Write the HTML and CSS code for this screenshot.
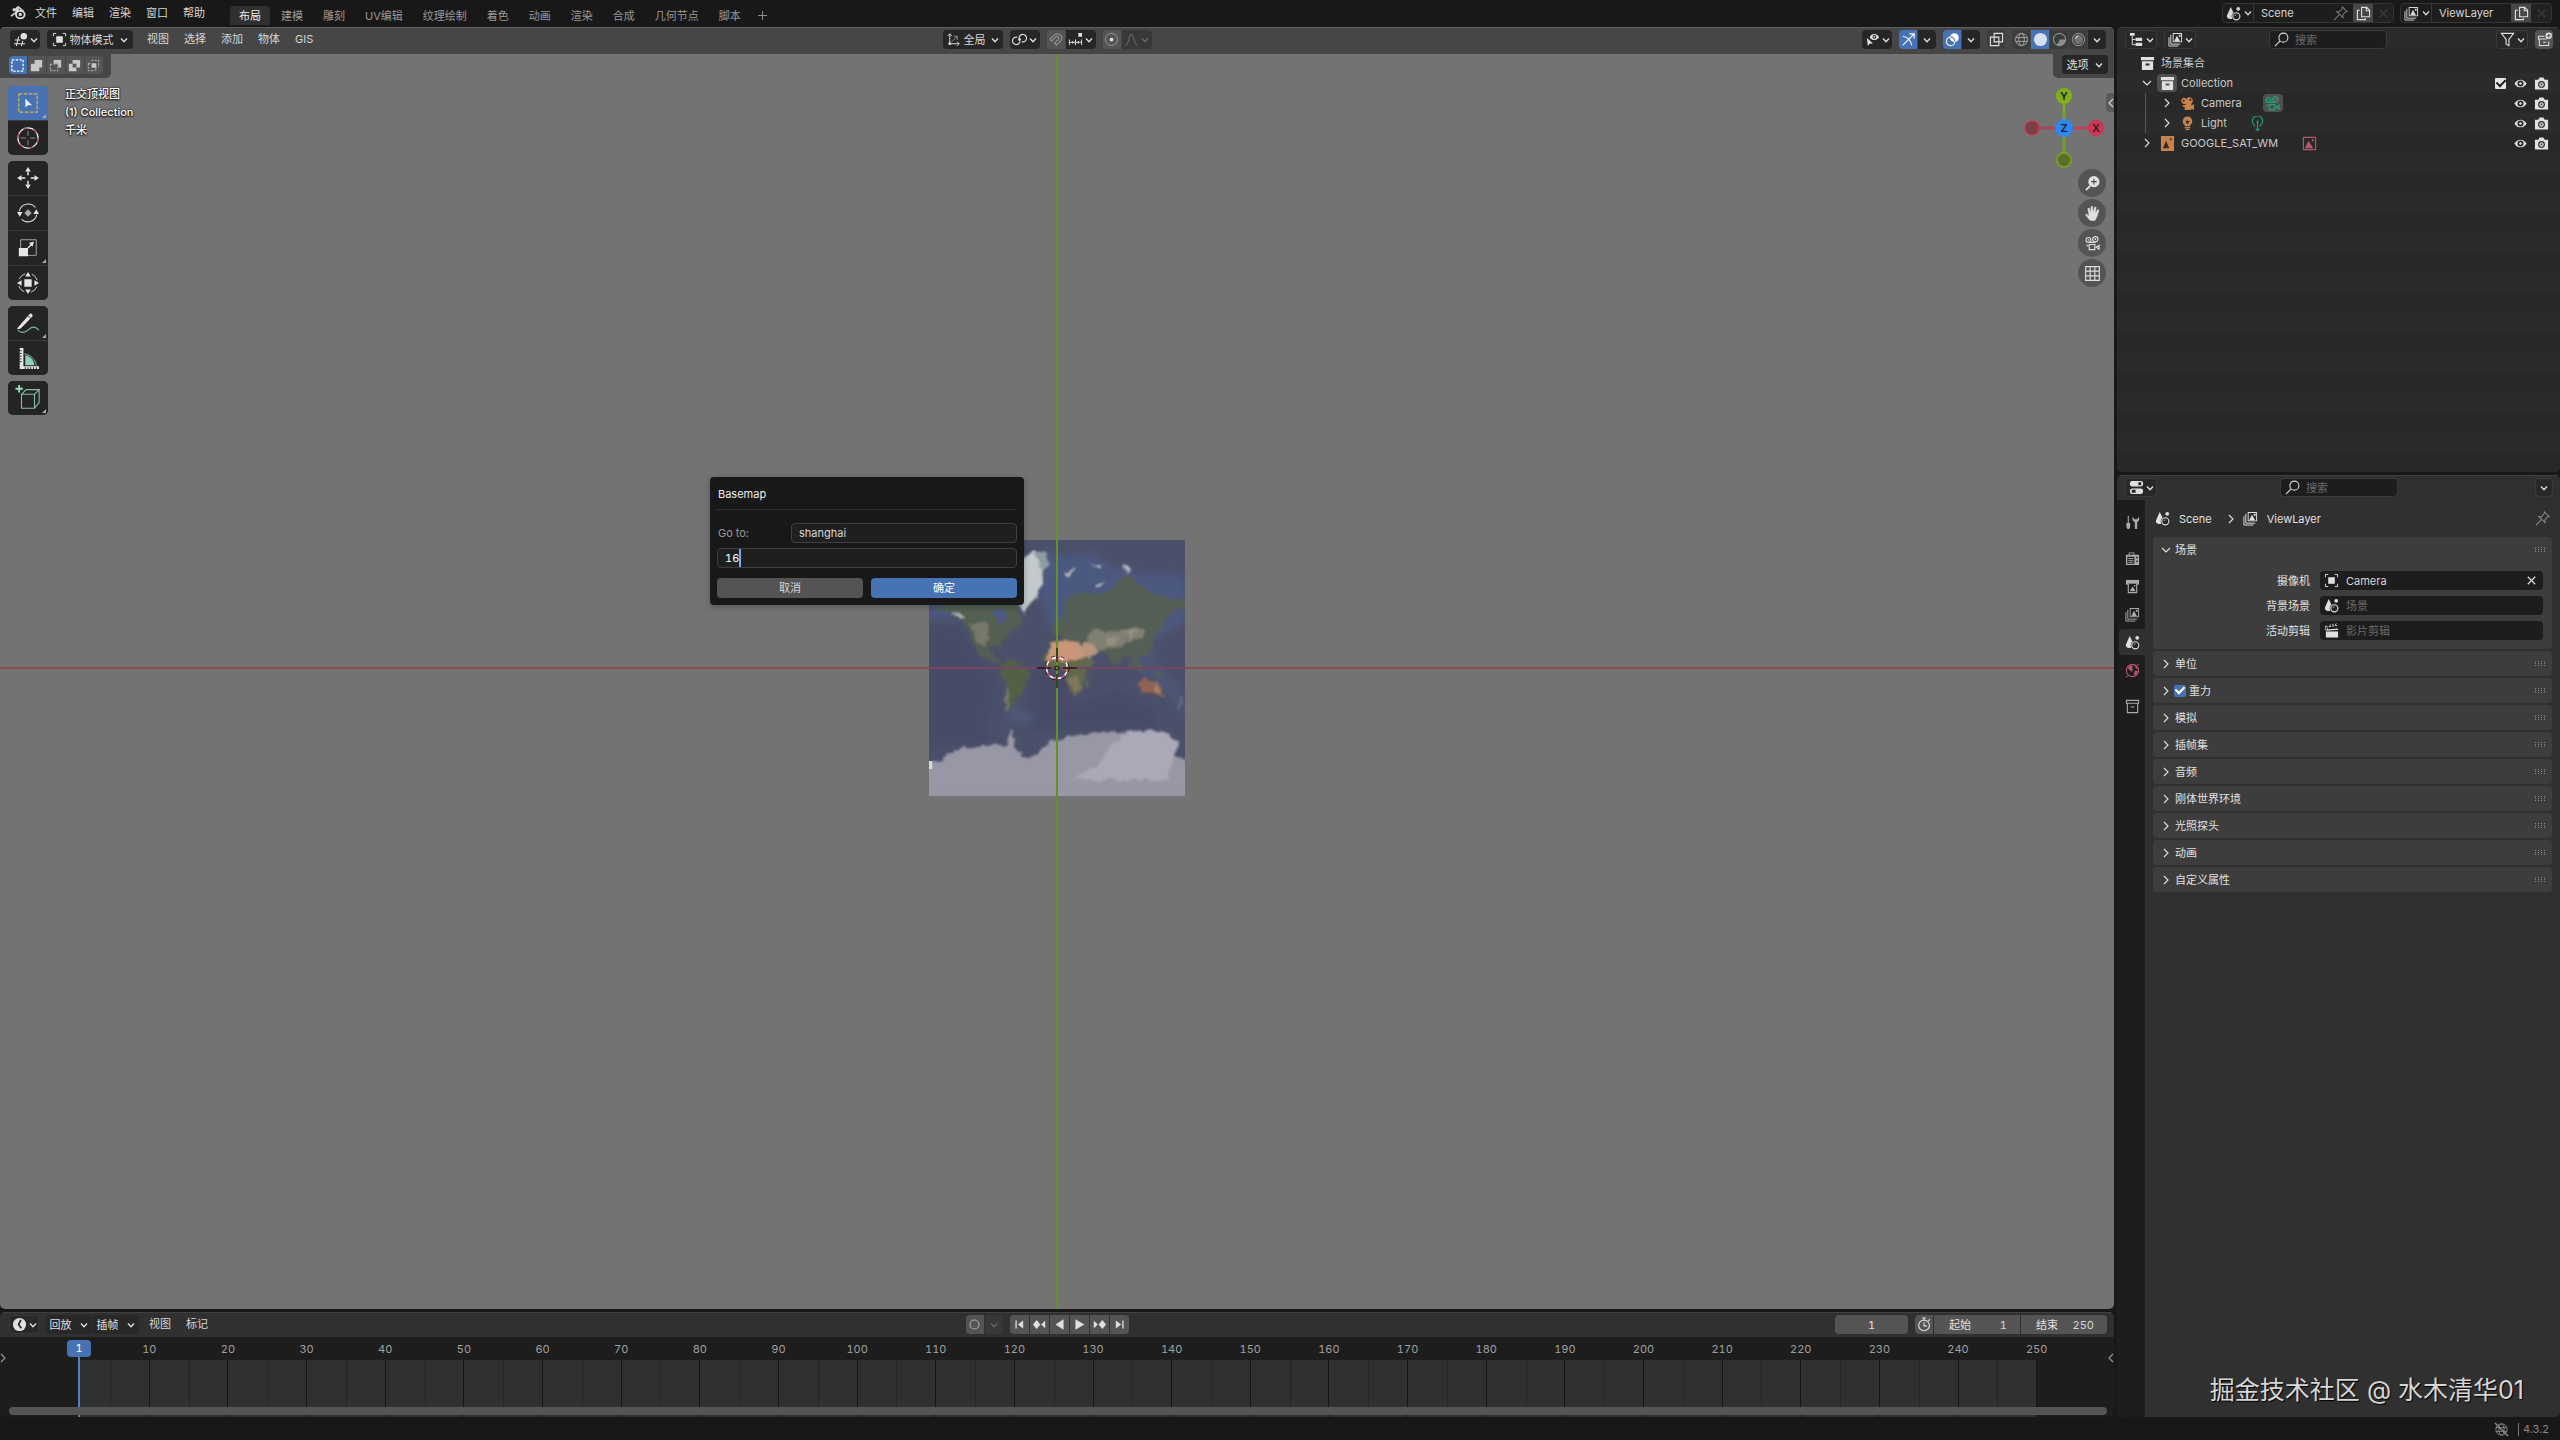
FILE: index.html
```html
<!DOCTYPE html>
<html lang="zh-CN">
<head>
<meta charset="utf-8">
<title>Blender</title>
<link rel="stylesheet" href="styles.css">
</head>
<body>
<svg class="sprite" aria-hidden="true">
  <defs>
  <symbol id="logo" viewBox="0 0 16 16"><path d="M1 11.2 8.6 5.4H3.4V4h5L6.8 2.8 8 1.7l5.600 4.600" fill="none" stroke="currentColor" stroke-width="1.500" stroke-linejoin="round"/><ellipse cx="10.300" cy="9.600" rx="4.300" ry="3.800" fill="none" stroke="currentColor" stroke-width="1.900"/><circle cx="10.300" cy="9.500" r="1.700" fill="currentColor"/></symbol>
  <symbol id="chev" viewBox="0 0 10 10"><path d="M2 3.500 5 6.800 8 3.500" fill="none" stroke="currentColor" stroke-width="1.300"/></symbol>
  <symbol id="chevr" viewBox="0 0 10 10"><path d="M3 1 7 5 3 9" fill="none" stroke="currentColor" stroke-width="1.100"/></symbol>
  <symbol id="ed3d" viewBox="0 0 16 16"><path d="M6 5 3.500 15M10.500 9.500 9 15M2 8.500h6M1 12.500h12" fill="none" stroke="currentColor" stroke-width="1.100"/><circle cx="11.500" cy="4.500" r="3.500" fill="currentColor"/></symbol>
  <symbol id="object" viewBox="0 0 16 16"><path d="M4.500 4.500h7v7h-7z" fill="currentColor"/><path d="M1.500 4.500v-3h3M11.500 1.500h3v3M14.500 11.500v3h-3M4.500 14.500h-3v-3" fill="none" stroke="currentColor"/></symbol>
  <symbol id="orient" viewBox="0 0 16 16"><path d="M4 2v10.500h10M1.800 4.200 4 2l2.200 2.200M11.800 10.300l2.200 2.200-2.200 2.200" fill="none" stroke="currentColor"/><circle cx="4" cy="12.500" r="1.500" fill="currentColor"/><path d="M6 10.500 11.500 5M8 4.500h4v4" fill="none" stroke="currentColor" opacity=".6"/></symbol>
  <symbol id="pivot" viewBox="0 0 16 16"><path d="M8.500 9.800a4 4 0 1 1-2.800-4.200M7.500 6.200a4 4 0 1 1 2.800 4.200" fill="none" stroke="currentColor" stroke-width="1.200"/><circle cx="8" cy="8" r="1.500" fill="currentColor"/></symbol>
  <symbol id="magnet" viewBox="0 0 16 16"><path d="M2 7.500 7 3c5-3.500 10 2.500 6.500 6.500L9 14l-2-2 4-4.200C12.500 5.500 10 3.500 8.500 5.200L4 9.500z" fill="none" stroke="currentColor" stroke-width="1.100"/></symbol>
  <symbol id="snapinc" viewBox="0 0 16 16"><path d="M1.500 8v6M14.500 8v6M1 11h14M5 9.500v3M8 8v6M11 9.500v3" fill="none" stroke="currentColor"/><path d="M11 1h4v4h-4z" fill="currentColor"/></symbol>
  <symbol id="prop" viewBox="0 0 16 16"><circle cx="8" cy="8" r="6.500" fill="none" stroke="currentColor" opacity=".5"/><circle cx="8" cy="8" r="2" fill="currentColor"/></symbol>
  <symbol id="falloff" viewBox="0 0 16 16"><path d="M1.500 14C6 13.500 5 2.500 8 2.500S10 13.500 14.500 14" fill="none" stroke="currentColor" stroke-width="1.200"/></symbol>
  <symbol id="visib" viewBox="0 0 16 16"><path d="M5 5.500c2-4.500 7.500-4.500 10 0-2.500 4-8 4-10 0z" fill="currentColor"/><circle cx="10" cy="5.200" r="2" fill="#222"/><circle cx="10" cy="5.200" r=".9" fill="currentColor"/><path d="m2 6.500 1 8.500 2-2.500 3.500-.5z" fill="currentColor"/></symbol>
  <symbol id="gizmo" viewBox="0 0 16 16"><path d="M2 14 13.500 2.500M9 2h5v5M2 4.500c4 .5 8.500 4 9.500 9.500" fill="none" stroke="currentColor" stroke-width="1.200"/></symbol>
  <symbol id="overlay" viewBox="0 0 16 16"><circle cx="10" cy="6" r="4.700" fill="currentColor"/><circle cx="6" cy="10" r="4.500" fill="none" stroke="currentColor" stroke-width="1.200"/><path d="M10.500 10A4.500 4.500 0 0 0 6 5.500" fill="none" stroke="#4772b3" stroke-width="1.200"/></symbol>
  <symbol id="xray" viewBox="0 0 16 16"><path d="M5.500 1.500h9v9h-9zM1.500 5.500h9v9h-9z" fill="none" stroke="currentColor" stroke-width="1.200"/></symbol>
  <symbol id="wire" viewBox="0 0 16 16"><g fill="none" stroke="currentColor"><circle cx="8" cy="8" r="6.500"/><ellipse cx="8" cy="8" rx="3" ry="6.500"/><path d="M2 6h12M2 10h12"/></g></symbol>
  <symbol id="solid" viewBox="0 0 16 16"><circle cx="8" cy="8" r="7" fill="#d4dff0"/></symbol>
  <symbol id="material" viewBox="0 0 16 16"><circle cx="8" cy="8" r="6.500" fill="none" stroke="currentColor"/><path d="M8 1.500v6.500h6.500A6.500 6.500 0 0 1 5 13.500 6.500 6.500 0 0 0 8 8z" fill="currentColor" opacity=".75"/></symbol>
  <symbol id="rendered" viewBox="0 0 16 16"><circle cx="8" cy="8" r="6.500" fill="none" stroke="currentColor"/><circle cx="8" cy="8" r="4.800" fill="currentColor" opacity=".5"/><path d="M5 7a4 4 0 0 1 3-3" fill="none" stroke="#fff"/></symbol>
  <symbol id="sel1" viewBox="0 0 16 16"><path d="M2 2h12v12H2z" fill="none" stroke="#fff" stroke-width="1.400" stroke-dasharray="2.500 1.500"/></symbol>
  <symbol id="sel2" viewBox="0 0 16 16"><path d="M6 2h8v8h-3v4H2V6h4z" fill="currentColor"/></symbol>
  <symbol id="sel3" viewBox="0 0 16 16"><path d="M6 2h8v8h-3V6H6z" fill="currentColor"/><path d="M2.500 6.500h8v7h-8z" fill="none" stroke="currentColor" stroke-dasharray="2 1.500"/></symbol>
  <symbol id="sel4" viewBox="0 0 16 16"><path fill-rule="evenodd" d="M6 2h8v8h-4v4H2V6h4zm0 4v4h4V6z" fill="currentColor"/></symbol>
  <symbol id="sel5" viewBox="0 0 16 16"><path d="M6 5.500h5v5H6z" fill="currentColor"/><path d="M6 2.500h7.500V10M2.500 6v7.500H10M2.500 6H5M10.500 13v-2" fill="none" stroke="currentColor" stroke-dasharray="2 1.500"/></symbol>
  <symbol id="t-select" viewBox="0 0 24 24"><path d="M2 2h20v20H2z" fill="none" stroke="#e2b14c" stroke-width="1.300" stroke-dasharray="4 1.500"/><path d="m9 7 .2 10 2.800-2.500 4.500 0z" fill="#e4ecf8"/></symbol>
  <symbol id="t-cursor" viewBox="0 0 24 24"><circle cx="12" cy="12" r="11" fill="none" stroke="#e6e6e6" stroke-width="1.400"/><circle cx="12" cy="12" r="11" fill="none" stroke="#b8445b" stroke-width="1.500" stroke-dasharray="5 6.500"/><path d="M12 4v5.500M12 14.500V20M4 12h5.500M14.500 12H20" stroke="#8c8c84" stroke-width="1.100"/></symbol>
  <symbol id="t-move" viewBox="0 0 24 24"><path d="m12 0 3 5H9zM12 24l-3-5h6zM0 12l5-3v6zM24 12l-5 3V9z" fill="#e6e6e6"/><path d="M12 5v4M12 15v4M5 12h4M15 12h4" stroke="#e6e6e6" stroke-width="1.600"/></symbol>
  <symbol id="t-rotate" viewBox="0 0 24 24"><path d="M2.500 10A10 10 0 0 1 20 6M21.500 14A10 10 0 0 1 5 19" fill="none" stroke="#ddd" stroke-width="1.200"/><path d="M0 11h6l-3 5zM18 13h6l-3-5z" fill="#e6e6e6"/><path d="m12 8 4 4-4 4-4-4z" fill="#aaa"/></symbol>
  <symbol id="t-scale" viewBox="0 0 24 24"><path d="M4 12V3h17v17h-9" fill="none" stroke="#b0b0b0"/><path d="M2 12h10v9H2z" fill="#e6e6e6"/><path d="m12 12 4-4" stroke="#e6e6e6" stroke-width="1.500"/><path d="M13 6.500 18.500 5 17 10.500z" fill="#e6e6e6"/></symbol>
  <symbol id="t-transform" viewBox="0 0 24 24"><circle cx="12" cy="12" r="10.500" fill="none" stroke="#ddd" stroke-dasharray="9 7.500" stroke-dashoffset="-4"/><path d="M8 8h8v8H8z" fill="#e6e6e6"/><path d="m12 0 3 5H9zM12 24l-3-5h6zM0 12l5-3v6zM24 12l-5 3V9z" fill="#e6e6e6"/></symbol>
  <symbol id="t-annotate" viewBox="0 0 24 24"><path d="M1 17 14 2c1-1.500 4 1 2.800 2.800L4 18l-4 1z" fill="#e6e6e6"/><path d="m12 4 3 3" stroke="#242424"/><path d="M1 20c5 4 9 2 12-1s7-4 11 1" fill="none" stroke="#78b8a0" stroke-width="1.200"/></symbol>
  <symbol id="t-measure" viewBox="0 0 24 24"><path d="M9 20V9c6 1 9 5 10 11z" fill="#8cd5b4"/><path d="M8 7.500c7 1 12 6 13 13" fill="none" stroke="#8cd5b4"/><path d="M3 1h4v20h17v3H3z" fill="#e6e6e6"/><path d="M3 4h2M3 7h2M3 10h2M3 13h2M3 16h2M9 24v-2M12 24v-2M15 24v-2M18 24v-2M21 24v-2" stroke="#222"/></symbol>
  <symbol id="t-cube" viewBox="-2 -2 28 28"><path d="M5 8h14v15H5zM5 8l5-5h14l-5 5M24 3v14l-5 6M19 8v15" fill="none" stroke="#82bfa4" stroke-width="1.200"/><path d="M2.500 -2v8M-1.500 2h8" stroke="#9be0bf" stroke-width="2"/></symbol>
  <symbol id="zoomin" viewBox="0 0 16 16"><circle cx="9.500" cy="6" r="6" fill="#e0e0e0"/><path d="M5.500 10.500 1 15" stroke="#e0e0e0" stroke-width="2"/><path d="M9.500 3v6M6.500 6h6" stroke="#444" stroke-width="1.100"/></symbol>
  <symbol id="hand" viewBox="0 0 16 16"><path d="M5 15 .5 9.200l1-.8L4.500 11 3 2.500l1.500-.3L6 7.500 6.500.5h1.600L8.600 7.300 10.400 1l1.500.4L11 8l2.700-4.200 1.300.8L12.500 12l-2 3.500H6z" fill="#e0e0e0" stroke="#e0e0e0" stroke-width=".5" stroke-linejoin="round"/></symbol>
  <symbol id="camout" viewBox="0 0 16 16"><g fill="none" stroke="currentColor" stroke-width="1.200"><circle cx="3.700" cy="4.200" r="2.600"/><circle cx="11" cy="3.400" r="2.800"/><path d="M4 6.800h7M4.500 9h6v5.500h-6zM12 12l3-2v4zM1.500 9.500l2 1.500"/></g><circle cx="11" cy="3.400" r=".9" fill="currentColor"/><circle cx="3.700" cy="4.200" r=".8" fill="currentColor"/></symbol>
  <symbol id="grid" viewBox="0 0 16 16"><path d="M.7.7h14.600v14.600H.7zM5.500.7v14.600M10.500.7v14.600M.7 5.500h14.600M.7 10.500h14.600" fill="none" stroke="#e0e0e0" stroke-width="1.200"/></symbol>
  <symbol id="scene" viewBox="0 0 16 16"><path d="M5 1 9 9c0 2-1 3.500-2.500 4.500C3 14.500.5 13 1 10z" fill="currentColor"/><circle cx="13" cy="3" r="2" fill="currentColor"/><circle cx="11" cy="11" r="4.900" fill="#252525"/><circle cx="11" cy="11" r="3.800" fill="none" stroke="currentColor" stroke-width="1.200"/><path d="M9.500 10.500a2 2 0 0 1 1.500-1.200" fill="none" stroke="currentColor" stroke-width=".8"/></symbol>
  <symbol id="layers" viewBox="0 0 16 16"><path fill-rule="evenodd" d="M5 1h10v10H5zm1 1v8h8V2z" fill="currentColor"/><path d="m6.500 10 3-6 3.500 6zM11.500 3h2v2h-2z" fill="currentColor"/><path d="M3 3v10h10M1 5.500V15h10" fill="none" stroke="currentColor"/></symbol>
  <symbol id="pin" viewBox="0 0 16 16"><path d="m10 1 5 5-2 .5-2.500 3 .2 3L4 6l3 .2L9.700 3zM6.500 9.500 1 15" fill="none" stroke="currentColor" stroke-width="1.100"/></symbol>
  <symbol id="copy" viewBox="0 0 16 16"><path d="M6 1.500h5.500l3 3v7H6zM11 1.500v3.500h3.500M4 4.500H1.500v10h8.500v-1.500" fill="none" stroke="currentColor" stroke-width="1.200"/></symbol>
  <symbol id="x" viewBox="0 0 16 16"><path d="m4 4 8 8M12 4l-8 8" stroke="currentColor" stroke-width="1.200"/></symbol>
  <symbol id="outliner" viewBox="0 0 16 16"><path d="M1 1h5v3H1zM7 6h7v3.500H7zM7 11.500h7V15H7z" fill="currentColor"/><path d="M3.500 4v9.500H7M3.500 8H7" fill="none" stroke="currentColor"/></symbol>
  <symbol id="search" viewBox="0 0 16 16"><circle cx="10" cy="6" r="4.800" fill="none" stroke="currentColor" stroke-width="1.200"/><path d="M6.500 9.500 1 15" stroke="currentColor" stroke-width="1.300"/></symbol>
  <symbol id="filter" viewBox="0 0 16 16"><path d="M1.500 1.500h13L9.500 8v6.500l-3-1.500V8z" fill="none" stroke="currentColor" stroke-width="1.200"/></symbol>
  <symbol id="newcoll" viewBox="0 0 16 16"><path d="M8 4.500H1.500v3h9M2.500 7.500v7h10V10M6.500 11h3" fill="none" stroke="currentColor" stroke-width="1.100"/><circle cx="12.500" cy="4" r="3.400" fill="currentColor"/><path d="M12.500 2v4M10.500 4h4" stroke="#484848"/></symbol>
  <symbol id="box" viewBox="0 0 16 16"><path fill-rule="evenodd" d="M1 1h14v3.500H1zM2 5.500h12V15H2zm4 2.500v2h4V8z" fill="currentColor"/></symbol>
  <symbol id="boxout" viewBox="0 0 16 16"><path d="M1.500 1.500h13v3h-13zM2.500 4.500v10h11v-10M6 8.500h4" fill="none" stroke="currentColor" stroke-width="1.200"/></symbol>
  <symbol id="camobj" viewBox="0 0 16 16"><path fill-rule="evenodd" d="M3.500 2a3 3 0 0 1 3 1.500 3.800 3.800 0 1 1 5.500 4.800V10l3-1.500V15l-3-1.500V15H5v-3.500H3v-2h3V8.200A3.200 3.200 0 1 1 3.500 2zM4 4a1 1 0 1 0 0 2 1 1 0 0 0 0-2zM11 2.800a1.200 1.200 0 1 0 0 2.400 1.200 1.200 0 0 0 0-2.400z" fill="#c8834c"/></symbol>
  <symbol id="lightobj" viewBox="0 0 16 16"><path fill-rule="evenodd" d="M8 .5a5 5 0 0 1 3 9V11H5V9.500a5 5 0 0 1 3-9zM5.500 4.500 7 8h2l1.500-3.500L9 5.500 8 4.500l-1 1z" fill="#c8834c"/><path d="M5 12.300h6M6 14.300h4" stroke="#c8834c" stroke-width="1.300"/></symbol>
  <symbol id="lightdata" viewBox="0 0 16 16"><path d="M5.500 11.500c0-2-3-3-3-6a5.500 5.500 0 0 1 11 0c0 3-3 4-3 6M8 6v9M6 13.500l2 2 2-2" fill="none" stroke="#1f9e78" stroke-width="1.200"/><circle cx="8" cy="6" r="1.200" fill="#1f9e78"/></symbol>
  <symbol id="imgobj" viewBox="0 0 16 16"><path d="M1 0h14v16H1z" fill="#c8834c"/><path d="m3 13 3.500-8L10 13z" fill="#3a2a1c"/><circle cx="11.500" cy="3.500" r="1.200" fill="#3a2a1c"/></symbol>
  <symbol id="imgdata" viewBox="0 0 16 16"><path d="M1.500 1.500h13v13h-13z" fill="none" stroke="#b4566c" stroke-width="1.200"/><path d="m3 13 4-8 5 8z" fill="#b4566c"/><path d="M10.500 3.500h2v2h-2z" fill="#b4566c"/></symbol>
  <symbol id="eye" viewBox="0 0 16 16"><path d="M1.500 8c3-5.500 10-5.500 13 0-3 5.500-10 5.500-13 0z" fill="currentColor"/><circle cx="8" cy="8" r="3.200" fill="#262626"/><circle cx="8" cy="8" r="1.400" fill="currentColor"/></symbol>
  <symbol id="photo" viewBox="0 0 16 16"><path d="M1 4h3.500L6 1.500h4L11.500 4H15v10.500H1z" fill="currentColor"/><circle cx="8" cy="9" r="3.600" fill="#262626"/><circle cx="8" cy="9" r="2.400" fill="currentColor"/><circle cx="8" cy="9" r="1.200" fill="#555"/></symbol>
  <symbol id="props" viewBox="0 0 16 16"><rect x="1" y="1" width="14" height="6" rx="2.500" fill="currentColor"/><rect x="1" y="9" width="14" height="6" rx="2.500" fill="currentColor"/><path d="M10 2.500h3v3h-3zM3 10.500h4v3H3z" fill="#222"/></symbol>
  <symbol id="tool" viewBox="0 0 16 16"><path d="M3.500 1v8" stroke="currentColor" stroke-width="1.200"/><path d="M1.500 8.500h4v4l-1 2.500h-2l-1-2.500zM8 1.500v4l2.500 2.500v7h2.500V8l2-2.500v-4l-2 3h-3z" fill="currentColor"/></symbol>
  <symbol id="render" viewBox="0 0 16 16"><path fill-rule="evenodd" d="M4 4V1.500h6V4h5v11H1V4zm1-1.500V4h4V2.500zM2.500 6v7.500H10V6zM12 6v2h1.500V6zm0 4v2h1.500v-2z" fill="currentColor"/><path d="M3.500 8h5.500M3.500 10h5.500M3.500 12h5.500" stroke="currentColor"/></symbol>
  <symbol id="output" viewBox="0 0 16 16"><path d="M1 1h14v5H1z" fill="currentColor"/><path d="M3.500 5v9.500h9V5" fill="#1d1d1d" stroke="currentColor" stroke-width="1.200"/><path d="m5 13 3-5 3.500 5zM9.500 6.500h1.500V8H9.500z" fill="currentColor"/></symbol>
  <symbol id="world" viewBox="0 0 16 16"><circle cx="8" cy="8" r="6.500" fill="none" stroke="#b4566c" stroke-width="1.200"/><path d="M3 5 6.500 2.500l2 1.500-1.500 1.500 1.500 1.500-1.500 2L5 7.500zM10.500 8.500l3 0-1.500 4-2.500.5zM11 3l2.500 2.500-1.500.5z" fill="#b4566c" stroke="#b4566c" stroke-width=".5"/><path d="m1 15 3-2M12 3l3-2" stroke="#b4566c"/></symbol>
  <symbol id="clip" viewBox="0 0 16 16"><path d="M2 9h13v6.500H2z" fill="currentColor"/><path d="m3 7.500 12-1" stroke="currentColor" stroke-width="1.300"/><path d="M1.500 3.500h2v4h-2zM6 3l1-1.500M9 2.500 10 1M12 2l1-1.500M5 4l9-1.500" fill="none" stroke="currentColor" stroke-dasharray="2.500 1"/></symbol>
  <symbol id="clock" viewBox="0 0 16 16"><circle cx="8" cy="8" r="7" fill="currentColor"/><path d="M9.500 3 7 8l3 4" fill="none" stroke="#222" stroke-width="1.800"/></symbol>
  <symbol id="dot" viewBox="0 0 16 16"><circle cx="8" cy="8" r="4.800" fill="none" stroke="currentColor" stroke-width="1.200"/></symbol>
  <symbol id="first" viewBox="0 0 16 16"><path d="M3 3h1.600v10H3zM12.500 3v10L6 8z" fill="currentColor"/></symbol>
  <symbol id="prevkey" viewBox="0 0 16 16"><path d="M0 8l4.500-5.500L9 8l-4.500 5.500zM15 3.500v9L10 8z" fill="currentColor"/></symbol>
  <symbol id="playrev" viewBox="0 0 16 16"><path d="M13 1.500v13L3 8z" fill="currentColor"/></symbol>
  <symbol id="play" viewBox="0 0 16 16"><path d="M3 1.500v13L14 8z" fill="currentColor"/></symbol>
  <symbol id="nextkey" viewBox="0 0 16 16"><path d="M16 8l-4.500-5.500L7 8l4.500 5.500zM1 3.500v9L6 8z" fill="currentColor"/></symbol>
  <symbol id="last" viewBox="0 0 16 16"><path d="M11.400 3H13v10h-1.600zM3.500 3v10L10 8z" fill="currentColor"/></symbol>
  <symbol id="watch" viewBox="0 0 16 16"><circle cx="7.500" cy="9" r="5.700" fill="none" stroke="currentColor" stroke-width="1.200"/><path d="M5.500 1h4M7.500 1v2M7.500 5.500V9.500h3M12 4l2-1.500" fill="none" stroke="currentColor" stroke-width="1.200"/></symbol>
  <symbol id="offline" viewBox="0 0 16 16"><g fill="none" stroke="currentColor"><circle cx="8" cy="8" r="6"/><ellipse cx="8" cy="8" rx="2.800" ry="6"/><path d="M2 6h12M2 10h12"/><path d="m1 1 14 14" stroke-width="1.600"/></g></symbol>
  <symbol id="grip" viewBox="0 0 12 6"><path d="M1 .5h10M1 2.500h10M1 4.500h10" stroke="currentColor" stroke-width="1" stroke-dasharray="1 2"/></symbol>
  </defs>
</svg>

<div class="app">
  <header class="topbar">
    <nav class="menus">
      <button class="menu logo" aria-label="Blender"><svg class="ic"><use href="#logo"/></svg></button>
      <button class="menu">文件</button><button class="menu">编辑</button><button class="menu">渲染</button><button class="menu">窗口</button><button class="menu">帮助</button>
    </nav>
    <nav class="tabs">
      <button class="tab active">布局</button><button class="tab">建模</button><button class="tab">雕刻</button><button class="tab">UV编辑</button><button class="tab">纹理绘制</button><button class="tab">着色</button><button class="tab">动画</button><button class="tab">渲染</button><button class="tab">合成</button><button class="tab">几何节点</button><button class="tab">脚本</button><button class="tab plus" aria-label="添加工作区"><svg viewBox="0 0 10 10"><path d="M5 0v10M0 5h10" stroke="currentColor"/></svg></button>
    </nav>
    <div class="ids">
      <div class="idblock scene-id">
        <button class="dd" aria-label="浏览场景"><svg class="ic"><use href="#scene"/></svg><svg class="cv"><use href="#chev"/></svg></button>
        <input class="name" value="Scene" aria-label="场景">
        <span class="pin"><svg class="ic"><use href="#pin"/></svg></span>
        <button class="sq lit" aria-label="新建场景"><svg class="ic"><use href="#copy"/></svg></button>
        <button class="sq off" aria-label="删除场景"><svg class="ic"><use href="#x"/></svg></button>
      </div>
      <div class="idblock layer-id">
        <button class="dd" aria-label="浏览视图层"><svg class="ic"><use href="#layers"/></svg><svg class="cv"><use href="#chev"/></svg></button>
        <input class="name" value="ViewLayer" aria-label="视图层">
        <button class="sq lit" aria-label="新建视图层"><svg class="ic"><use href="#copy"/></svg></button>
        <button class="sq off" aria-label="删除视图层"><svg class="ic"><use href="#x"/></svg></button>
      </div>
    </div>
  </header>

  <div class="workspace">
    <main class="left">
      <section class="area viewport">
        <div class="axis-x"></div>
        <svg class="map" viewBox="688 240 768 768">
          <defs>
            <filter id="coast" x="0" y="0" width="100%" height="100%" filterUnits="objectBoundingBox">
              <feTurbulence type="fractalNoise" baseFrequency=".04" numOctaves="3" seed="4" result="n"/>
              <feDisplacementMap in="SourceGraphic" in2="n" scale="26" xChannelSelector="R" yChannelSelector="G"/>
              <feGaussianBlur stdDeviation="3"/>
            </filter>
            <filter id="softer" x="-20%" y="-20%" width="140%" height="140%"><feGaussianBlur stdDeviation="10"/></filter>
          </defs>
          <path d="M688 240h768v768H688z" fill="#4b506a"/>
          <g filter="url(#softer)">
            <path d="M688 400h270v60l-20 60-40-10-60-40-150 10zM1030 270l60 20 90-10 60 40 70 20 60 5 45-10 41 20v130l-90 60-30-90-180 0-100 60-20-80-30-50z" fill="#4b597f"/>
            <path d="M688 490l90 10 60 90 50 60-30 200-170 20zM1000 620l90 20 40 90 120-40 120 60v60l-400 0z" fill="#474c68"/>
            <path d="M1290 560l70 0 20 60 60 60 17 90-30-40-50-50-80-70z" fill="#4b5675"/>
            <path d="M925 690l30 60 60 20-30 20-60-10z" fill="#4d5878"/>
          </g>
          <g filter="url(#coast)">
            <path d="M960 400l10-110 30-20 36 14 8 18-12 28v40l-16 32-22 22-16 36-16-12z" fill="#c3c9cc"/>
            <path d="M1004 275l40 14 4 18-20 40-4-30z" fill="#8d9ca0"/>
            <path d="M700 446l40-10 215-10 4 40 12 12-8 18-22 8-12 12-8 18-16 16-2 18-8-2-8-8-14 8v18l14 10 14 8 4 14-24-10-30-16-18-22-18-28-10-34-18-24-26-20z" fill="#535e51"/>
            <path d="M815 490l50 0 0 40-10 40-25-28z" fill="#77796a"/>
            <path d="M876 458l30-12 20 20-16 14-14 16-8-20z" fill="#4d5a87"/>
            <path d="M904 610l22-12 34 8 14 12 20 20-6 20-14 34-20 20-22 30-2 20-14-14 4-48 0-30-18-30z" fill="#536047"/>
            <path d="M920 660l8 40-4 52-8-10 4-50z" fill="#7d7a70"/>
            <path d="M1062 522l0-30 24-12 10-60 30-24 30 6 40 0 38-12 30-36 20-14 30 34 40 24 56 14 50 8v28l-36 4-30 28-4 30-26 18 0 34-26 26-24 4 8 26-12 2-20-30-16-2-18 24-10 6-20-36-26-10-32-6-24-20-30 6-26-18z" fill="#545f56"/>
            <path d="M1180 505l50 8 60-6 40 0 0 20-50 18-20 18-36-6-30 14-28-16-10-20z" fill="#7f7f72"/>
            <path d="M1220 530l40 10-20 16-24-8zM1270 510l50 4-30 16z" fill="#94907f"/>
            <path d="M1150 545l16 0 32 30-28 22-20-30z" fill="#b8957c"/>
            <path d="M1053 552l36-12 52 8 12 14 14 34 18 6-26 46-14 44-24 14-16-24-4-42-14-14-38 0-16-30z" fill="#64684b"/>
            <path d="M1053 552l36-12 52 8 14 20 6 22-40 12-60 0-22-2z" fill="#c8977a"/>
            <path d="M1105 655l30-10 6 40-20 16z" fill="#81765f"/>
            <path d="M1168 655l6 6-6 20-5-4z" fill="#6a7157"/>
            <path d="M1316 672l24-16 16 6 14-4 10 14 12 18-6 28-24-20-42 2z" fill="#8d6454"/>
            <path d="M1366 672l18 12-2 24-16-16z" fill="#a0846c"/>
            <path d="M1098 345l12-22 18 2-12 14-14 12zM1176 316l36-4-6 8-24 0zM1268 316l8-4 22 24-12 2zM1190 382l26-22-16 20z" fill="#bcc4ca"/>
            <path d="M1440 710l10 8-14 32-2-8z" fill="#5f6c88"/>
            <path d="M1285 605l20 20 20-14 14 14-8 8-50-8zM1360 634l30 10-20 4z" fill="#56654f"/>
            <path d="M680 905l44 0 20-22 40-16 30-6 50-2 60-4 6-28 12-18 4 60 38 28 34-20 24-28 40-16 50-4 56-14 50 4 52-8 60 2 50 6 36 30-10 40 41 16v140H680z" fill="#9797a5"/>
            <path d="M1115 960l76-44 56-70 42-32 50 0 60 6 36 30-20 50-6 60z" fill="#a9a9b8"/>
            <path d="M760 456l36 16-4 6-30-14z" fill="#bbb"/>
          </g>
          <path d="M688 985h768v23H688z" fill="#9797a5"/>
          <path d="M688 903h10v24h-10z" fill="#d4d8de"/>
        </svg>
        <div class="axis-x over"></div>
        <div class="axis-y"></div>
        <svg class="cursor3d" viewBox="0 0 40 40"><circle cx="20" cy="20" r="10.500" fill="none" stroke="#fff" stroke-width="1.300"/><circle cx="20" cy="20" r="10.500" fill="none" stroke="#d22f3c" stroke-width="1.300" stroke-dasharray="4 4"/><circle cx="20" cy="20" r="12" fill="none" stroke="#111" stroke-dasharray="4 6" opacity=".7"/><path d="M20 0v14M20 26v14M0 20h14M26 20h14" stroke="#000"/><circle cx="20" cy="20" r="2" fill="none" stroke="#111"/></svg>

        <div class="hdr vhdr">
          <div class="grp">
            <button class="btn w30" aria-label="编辑器类型"><svg class="ic"><use href="#ed3d"/></svg><svg class="cv"><use href="#chev"/></svg></button>
            <label class="btn w86"><svg class="ic"><use href="#object"/></svg><select aria-label="模式"><option>物体模式</option></select><svg class="cv"><use href="#chev"/></svg></label>
            <nav class="menus"><button class="menu">视图</button><button class="menu">选择</button><button class="menu">添加</button><button class="menu">物体</button><button class="menu">GIS</button></nav>
          </div>
          <div class="grp mid">
            <label class="btn w60"><svg class="ic"><use href="#orient"/></svg><select aria-label="坐标系"><option>全局</option></select><svg class="cv"><use href="#chev"/></svg></label>
            <button class="btn w30" aria-label="轴心点"><svg class="ic"><use href="#pivot"/></svg><svg class="cv"><use href="#chev"/></svg></button>
            <div class="joined"><button class="btn sq lit dim" aria-label="吸附"><svg class="ic"><use href="#magnet"/></svg></button><button class="btn w30" aria-label="吸附到"><svg class="ic"><use href="#snapinc"/></svg><svg class="cv"><use href="#chev"/></svg></button></div>
            <div class="joined"><button class="btn sq lit" aria-label="衰减编辑"><svg class="ic"><use href="#prop"/></svg></button><button class="btn w30 off" aria-label="衰减"><svg class="ic"><use href="#falloff"/></svg><svg class="cv"><use href="#chev"/></svg></button></div>
          </div>
          <div class="grp end">
            <button class="btn w30" aria-label="可见性"><svg class="ic"><use href="#visib"/></svg><svg class="cv"><use href="#chev"/></svg></button>
            <div class="joined"><button class="btn sq on" aria-label="操纵杆"><svg class="ic"><use href="#gizmo"/></svg></button><button class="btn sq" aria-label="操纵杆选项"><svg class="cv"><use href="#chev"/></svg></button></div>
            <div class="joined"><button class="btn sq on" aria-label="叠加层"><svg class="ic"><use href="#overlay"/></svg></button><button class="btn sq" aria-label="叠加层选项"><svg class="cv"><use href="#chev"/></svg></button></div>
            <button class="btn sq mid-gray" aria-label="透视"><svg class="ic"><use href="#xray"/></svg></button>
            <div class="joined"><button class="btn sq mid-gray dim2" aria-label="线框"><svg class="ic"><use href="#wire"/></svg></button><button class="btn sq on" aria-label="实体"><svg class="ic"><use href="#solid"/></svg></button><button class="btn sq mid-gray dim2" aria-label="材质预览"><svg class="ic"><use href="#material"/></svg></button><button class="btn sq mid-gray dim2" aria-label="渲染"><svg class="ic"><use href="#rendered"/></svg></button><button class="btn sq" aria-label="着色选项"><svg class="cv"><use href="#chev"/></svg></button></div>
          </div>
        </div>

        <div class="under">
          <div class="selmodes"><button class="on" aria-label="设置"><svg class="ic"><use href="#sel1"/></svg></button><button aria-label="扩展"><svg class="ic"><use href="#sel2"/></svg></button><button aria-label="减去"><svg class="ic"><use href="#sel3"/></svg></button><button aria-label="反转"><svg class="ic"><use href="#sel4"/></svg></button><button aria-label="相交"><svg class="ic"><use href="#sel5"/></svg></button></div>
          <div class="options"><button class="btn">选项<svg class="cv"><use href="#chev"/></svg></button></div>
        </div>

        <div class="canvas-ui">
          <div class="tools">
            <div class="toolset"><button class="on corner" aria-label="框选"><svg><use href="#t-select"/></svg></button><button aria-label="游标"><svg><use href="#t-cursor"/></svg></button></div>
            <div class="toolset"><button aria-label="移动"><svg><use href="#t-move"/></svg></button><button aria-label="旋转"><svg><use href="#t-rotate"/></svg></button><button class="corner" aria-label="缩放"><svg><use href="#t-scale"/></svg></button><button aria-label="变换"><svg><use href="#t-transform"/></svg></button></div>
            <div class="toolset"><button class="corner" aria-label="标注"><svg><use href="#t-annotate"/></svg></button><button aria-label="测量"><svg><use href="#t-measure"/></svg></button></div>
            <div class="toolset"><button class="corner" aria-label="添加立方体"><svg class="wide"><use href="#t-cube"/></svg></button></div>
          </div>
          <div class="info"><p>正交顶视图</p><p>(1) Collection</p><p>千米</p></div>
          <div class="nav3d">
            <svg class="gizmo" viewBox="0 0 82 84">
              <path d="M10 42h28" stroke="#a8455a" stroke-width="3"/><path d="M44 42h28" stroke="#b8455a" stroke-width="3"/>
              <path d="M41 10v32" stroke="#7ba428" stroke-width="3"/><path d="M41 42v28" stroke="#76a025" stroke-width="3"/>
              <circle cx="9" cy="42" r="7" fill="#783f48" stroke="#c03a50" stroke-width="1.500"/>
              <circle cx="41" cy="74" r="7" fill="#56702a" stroke="#7da61c" stroke-width="1.500"/>
              <circle cx="73" cy="42" r="8" fill="#d0344e"/><circle cx="41" cy="10" r="8" fill="#7fb018"/><circle cx="41" cy="42" r="9" fill="#2f87f0"/>
              <text x="41" y="14">Y</text><text x="41" y="46">Z</text><text x="73" y="46">X</text>
            </svg>
            <button class="round" aria-label="缩放视图"><svg class="ic"><use href="#zoomin"/></svg></button>
            <button class="round" aria-label="平移视图"><svg class="ic"><use href="#hand"/></svg></button>
            <button class="round" aria-label="摄像机视图"><svg class="ic"><use href="#camout"/></svg></button>
            <button class="round" aria-label="正交视图"><svg class="ic"><use href="#grid"/></svg></button>
          </div>
        </div>
        <button class="sidetab" aria-label="侧栏"><svg class="cv flip"><use href="#chevr"/></svg></button>

        <form class="dialog">
          <h2>Basemap</h2>
          <div class="row"><label for="goto">Go to:</label><input id="goto" value="shanghai"></div>
          <div class="zoomfield"><input value="16" aria-label="Zoom"><i class="caret"></i></div>
          <div class="actions"><button type="button">取消</button><button type="button" class="ok">确定</button></div>
        </form>
      </section>

      <section class="area timeline">
        <div class="hdr">
          <div class="grp">
            <button class="btn w30" aria-label="编辑器类型"><svg class="ic"><use href="#clock"/></svg><svg class="cv"><use href="#chev"/></svg></button>
            <div class="joined"><button class="btn w46">回放<svg class="cv"><use href="#chev"/></svg></button><button class="btn w46">插帧<svg class="cv"><use href="#chev"/></svg></button></div>
            <nav class="menus tmenus"><button class="menu">视图</button><button class="menu">标记</button></nav>
          </div>
          <div class="grp mid">
            <div class="joined"><button class="btn sq lit dim2" aria-label="自动插帧"><svg class="ic"><use href="#dot"/></svg></button><button class="btn sq off" aria-label="自动插帧选项"><svg class="cv"><use href="#chev"/></svg></button></div>
            <div class="joined play"><button class="btn lit" aria-label="首帧"><svg class="ic"><use href="#first"/></svg></button><button class="btn lit" aria-label="上一关键帧"><svg class="ic"><use href="#prevkey"/></svg></button><button class="btn lit" aria-label="倒放"><svg class="ic"><use href="#playrev"/></svg></button><button class="btn lit" aria-label="播放"><svg class="ic"><use href="#play"/></svg></button><button class="btn lit" aria-label="下一关键帧"><svg class="ic"><use href="#nextkey"/></svg></button><button class="btn lit" aria-label="末帧"><svg class="ic"><use href="#last"/></svg></button></div>
          </div>
          <div class="grp end">
            <input class="btn lit frame" value="1" aria-label="当前帧">
            <div class="joined"><button class="btn sq lit" aria-label="预览范围"><svg class="ic"><use href="#watch"/></svg></button><label class="btn lit range"><span>起始</span><input value="1"></label><label class="btn lit range"><span>结束</span><input value="250"></label></div>
          </div>
        </div>
        <div class="ruler">
          <ol><li>10</li><li>20</li><li>30</li><li>40</li><li>50</li><li>60</li><li>70</li><li>80</li><li>90</li><li>100</li><li>110</li><li>120</li><li>130</li><li>140</li><li>150</li><li>160</li><li>170</li><li>180</li><li>190</li><li>200</li><li>210</li><li>220</li><li>230</li><li>240</li><li>250</li></ol>
          <div class="playhead"><b>1</b></div>
          <div class="scroll"></div>
          <svg class="cv edge-l"><use href="#chevr"/></svg><svg class="cv edge-r flip"><use href="#chevr"/></svg>
        </div>
      </section>
    </main>

    <aside class="right">
      <section class="area outliner">
        <div class="hdr">
          <div class="grp"><button class="btn w32" aria-label="编辑器类型"><svg class="ic"><use href="#outliner"/></svg><svg class="cv"><use href="#chev"/></svg></button><button class="btn w32" aria-label="显示模式"><svg class="ic"><use href="#layers"/></svg><svg class="cv"><use href="#chev"/></svg></button></div>
          <label class="search"><svg class="ic"><use href="#search"/></svg><input placeholder="搜索" aria-label="搜索"></label>
          <div class="grp end"><button class="btn w32" aria-label="过滤"><svg class="ic"><use href="#filter"/></svg><svg class="cv"><use href="#chev"/></svg></button><button class="btn sq lit" aria-label="新建集合"><svg class="ic"><use href="#newcoll"/></svg></button></div>
        </div>
        <ul class="tree">
          <li><span class="tw"><svg class="ic"><use href="#box"/></svg></span>场景集合</li>
          <li><span class="tw"><svg class="cv down"><use href="#chevr"/></svg></span><span class="tw hot"><svg class="ic"><use href="#box"/></svg></span>Collection<span class="flags"><input type="checkbox" checked aria-label="排除"><svg class="ic"><use href="#eye"/></svg><svg class="ic"><use href="#photo"/></svg></span></li>
          <li class="child"><span class="tw"><svg class="cv"><use href="#chevr"/></svg></span><span class="tw"><svg class="ic"><use href="#camobj"/></svg></span>Camera<span class="data hotg"><svg class="ic"><use href="#camout"/></svg></span><span class="flags"><svg class="ic"><use href="#eye"/></svg><svg class="ic"><use href="#photo"/></svg></span></li>
          <li class="child"><span class="tw"><svg class="cv"><use href="#chevr"/></svg></span><span class="tw"><svg class="ic"><use href="#lightobj"/></svg></span>Light<span class="data"><svg class="ic"><use href="#lightdata"/></svg></span><span class="flags"><svg class="ic"><use href="#eye"/></svg><svg class="ic"><use href="#photo"/></svg></span></li>
          <li><span class="tw"><svg class="cv"><use href="#chevr"/></svg></span><span class="tw"><svg class="ic"><use href="#imgobj"/></svg></span>GOOGLE_SAT_WM<span class="data"><svg class="ic"><use href="#imgdata"/></svg></span><span class="flags"><svg class="ic"><use href="#eye"/></svg><svg class="ic"><use href="#photo"/></svg></span></li>
        </ul>
      </section>

      <section class="area properties">
        <div class="hdr">
          <div class="grp"><button class="btn w32" aria-label="编辑器类型"><svg class="ic"><use href="#props"/></svg><svg class="cv"><use href="#chev"/></svg></button></div>
          <label class="search"><svg class="ic"><use href="#search"/></svg><input placeholder="搜索" aria-label="搜索属性"></label>
          <div class="grp end"><button class="btn sq" aria-label="选项"><svg class="cv"><use href="#chev"/></svg></button></div>
        </div>
        <div class="pbody">
          <nav class="ptabs">
            <button class="gap" aria-label="工具"><svg class="ic"><use href="#tool"/></svg></button><button aria-label="渲染"><svg class="ic"><use href="#render"/></svg></button><button aria-label="输出"><svg class="ic"><use href="#output"/></svg></button><button aria-label="视图层"><svg class="ic"><use href="#layers"/></svg></button><button class="on" aria-label="场景"><svg class="ic"><use href="#scene"/></svg></button><button class="gap" aria-label="世界环境"><svg class="ic"><use href="#world"/></svg></button><button aria-label="集合"><svg class="ic"><use href="#boxout"/></svg></button>
          </nav>
          <div class="pmain">
            <div class="crumbs"><svg class="ic"><use href="#scene"/></svg><span>Scene</span><svg class="cv"><use href="#chevr"/></svg><svg class="ic"><use href="#layers"/></svg><span>ViewLayer</span><svg class="ic pinr"><use href="#pin"/></svg></div>
            <div class="panels">
              <section class="panel">
                <h3><svg class="cv down"><use href="#chevr"/></svg>场景<svg class="grip"><use href="#grip"/></svg></h3>
                <div class="fields">
                  <label for="f-cam">摄像机</label><div class="field"><svg class="ic"><use href="#object"/></svg><input id="f-cam" value="Camera"><svg class="ic clear"><use href="#x"/></svg></div>
                  <label for="f-bg">背景场景</label><div class="field"><svg class="ic"><use href="#scene"/></svg><input id="f-bg" placeholder="场景"></div>
                  <label for="f-clip">活动剪辑</label><div class="field"><svg class="ic"><use href="#clip"/></svg><input id="f-clip" placeholder="影片剪辑"></div>
                </div>
              </section>
              <section class="panel"><h3><svg class="cv"><use href="#chevr"/></svg>单位<svg class="grip"><use href="#grip"/></svg></h3></section>
              <section class="panel"><h3><svg class="cv"><use href="#chevr"/></svg><label><input type="checkbox" checked>重力</label><svg class="grip"><use href="#grip"/></svg></h3></section>
              <section class="panel"><h3><svg class="cv"><use href="#chevr"/></svg>模拟<svg class="grip"><use href="#grip"/></svg></h3></section>
              <section class="panel"><h3><svg class="cv"><use href="#chevr"/></svg>插帧集<svg class="grip"><use href="#grip"/></svg></h3></section>
              <section class="panel"><h3><svg class="cv"><use href="#chevr"/></svg>音频<svg class="grip"><use href="#grip"/></svg></h3></section>
              <section class="panel"><h3><svg class="cv"><use href="#chevr"/></svg>刚体世界环境<svg class="grip"><use href="#grip"/></svg></h3></section>
              <section class="panel"><h3><svg class="cv"><use href="#chevr"/></svg>光照探头<svg class="grip"><use href="#grip"/></svg></h3></section>
              <section class="panel"><h3><svg class="cv"><use href="#chevr"/></svg>动画<svg class="grip"><use href="#grip"/></svg></h3></section>
              <section class="panel"><h3><svg class="cv"><use href="#chevr"/></svg>自定义属性<svg class="grip"><use href="#grip"/></svg></h3></section>
            </div>
          </div>
        </div>
        <p class="watermark">掘金技术社区 @ 水木清华01</p>
      </section>
    </aside>
  </div>

  <footer class="status"><svg class="ic"><use href="#offline"/></svg><span>4.3.2</span></footer>
</div>
</body>
</html>
```
FILE: styles.css
```css
* { box-sizing: border-box; margin: 0; padding: 0; }
html, body { height: 100%; }
body, button, input, select { font: 11px/16px Inter, "Noto Sans CJK SC", sans-serif; font-variant-numeric: tabular-nums; color: #d6d6d6; }
body { background: #181818; overflow: hidden; }
button, input, select { background: none; border: 0; outline: 0; border-radius: 0; }
button { white-space: nowrap; }
input { min-width: 0; }
input::placeholder { color: #6a6a6a; opacity: 1; }
select { appearance: none; }
ul, ol { list-style: none; }
svg { display: block; flex: none; }
.sprite { position: absolute; width: 0; height: 0; }
.ic { width: 15px; height: 15px; }
.cv { width: 10px; height: 10px; }
.flip { transform: scaleX(-1); }
.down { transform: rotate(90deg); }

.app { display: grid; grid-template-rows: 27px 1fr 22px; height: 100vh; }

/* top bar */
.topbar { display: flex; align-items: flex-start; }
.menus { display: flex; }
.menu { padding: 0 7px; margin-right: 1px; height: 18px; }
.topbar .menus { padding: 4px 0 0 3px; }
.menu.logo { padding-right: 1px; }
.menu.logo .ic { width: 16px; height: 16px; }
.tabs { display: flex; gap: 2px; margin-left: 17px; padding-top: 6px; }
.tab { height: 19px; padding: 0 9px; color: #989898; border-radius: 4px 4px 0 0; }
.tab.active { background: #303030; color: #eee; }
.tab.plus { padding: 0 6px; }
.tab.plus svg { width: 9px; height: 9px; }
.ids { display: flex; gap: 6px; margin-left: auto; padding: 3px 8px 0 0; }
.idblock { display: flex; height: 20px; border: 1px solid #353535; border-radius: 4px; background: #1d1d1d; overflow: hidden; }
.scene-id { width: 172px; }
.layer-id { width: 152px; }
.idblock .dd { display: flex; align-items: center; width: 31px; padding-left: 3px; gap: 2px; border-right: 1px solid #353535; }
.idblock .name { flex: 1; padding-left: 7px; }
.pin { display: flex; align-items: center; width: 20px; color: #777; }
.idblock .sq { width: 20px; padding-left: 3px; background: #222; color: #3c3c3c; }
.idblock .lit { background: #484848; color: #ddd; }

/* layout of editors */
.workspace { display: grid; grid-template-columns: 1fr 443px; gap: 3px; padding: 0 0 1px; min-height: 0; }
.left { display: grid; grid-template-rows: 1fr 105px; gap: 3px; min-height: 0; min-width: 0; }
.right { display: grid; grid-template-rows: 445px 1fr; gap: 3px; min-height: 0; }
.area { position: relative; border-radius: 5px; overflow: hidden; background: #303030; display: flex; flex-direction: column; min-width: 0; }

/* editor headers */
.hdr { display: grid; grid-template-columns: 1fr auto 1fr; height: 26px; flex: none; padding: 2px 7px 0 9px; border-top: 1px solid #404040; align-items: start; }
.grp { display: flex; gap: 7px; }
.grp.end { justify-content: flex-end; }
.grp.mid { padding-right: 22px; }
.joined { display: flex; gap: 1px; }
.btn { display: flex; align-items: center; justify-content: center; gap: 3px; height: 19px; border-radius: 4px; background: #262626; color: #e0e0e0; }
.joined .btn:not(:first-child) { border-top-left-radius: 0; border-bottom-left-radius: 0; }
.joined .btn:not(:last-child) { border-top-right-radius: 0; border-bottom-right-radius: 0; }
.w30 { width: 30px; }
.w32 { width: 32px; }
.w46 { width: 46px; }
.w60 { width: 60px; }
.w86 { width: 86px; }
.btn.sq { width: 18px; }
.btn.lit { background: #545454; }
.btn.mid-gray { background: #3c3c3c; }
.btn.on { background: #4772b3; color: #fff; }
.btn.dim { color: #999; }
.btn.dim2 { color: #a8a8a8; }
.btn.off { background: #383838; color: #666; }
.w86 select { width: 46px; }
.w60 select { width: 23px; }

/* 3D viewport */
.viewport { background: #737373; }
.vhdr { height: 27px; padding: 2px 8px 0 10px; background: #464646; border-top-color: #606060; position: relative; }
.w30 .cv, .w32 .cv { margin-right: -1px; }
.w30, .w32 { gap: 1px; }
.under { display: flex; justify-content: space-between; height: 24px; position: relative; }
.selmodes { display: flex; width: 111px; padding: 2px 0 0 9px; gap: 1px; background: #464646; border-bottom-right-radius: 5px; }
.selmodes button { width: 18px; height: 18px; padding-left: 1px; background: #555; color: #c8c8c8; }
.selmodes button:first-child { border-radius: 4px 0 0 4px; }
.selmodes button:last-child { border-radius: 0 4px 4px 0; }
.selmodes .on { background: #4772b3; }
.options { padding: 1px 6px 0 9px; background: #464646; border-bottom-left-radius: 5px; }
.options .btn { width: 46px; gap: 5px; }
.axis-x, .axis-y, .map, .cursor3d { position: absolute; }
.axis-x { left: 0; right: 0; top: calc(50% - 1px); height: 2px; background: #8b4c58; }
.axis-x.over { left: calc(50% - 128px); right: calc(50% - 128px); background: #7a4263; }
.axis-y { top: 0; bottom: 0; left: calc(50% - 1px); width: 2px; background: #648f2a; }
.map { left: calc(50% - 128px); top: calc(50% - 128px); width: 256px; height: 256px; }
.cursor3d { left: calc(50% - 20px); top: calc(50% - 20px); width: 40px; height: 40px; }
.canvas-ui { position: relative; display: flex; padding: 8px 8px 0; }
.tools { display: flex; flex-direction: column; gap: 6px; }
.toolset { display: flex; flex-direction: column; gap: 1px; width: 40px; border-radius: 5px; background: #3c3c3c; overflow: hidden; }
.toolset button { position: relative; display: flex; align-items: center; justify-content: center; height: 34px; background: #242424; }
.toolset button svg { width: 22px; height: 22px; overflow: visible; }
.toolset button .wide { width: 26px; height: 26px; }
.toolset .on { background: #4772b3; }
.corner::after { content: ""; position: absolute; right: 2px; bottom: 2px; border: 2px solid; border-color: transparent #aaa #aaa transparent; }
.info { margin-top: -1px; padding-left: 17px; font-weight: 500; line-height: 18px; color: #fff; text-shadow: 0 0 2px #000, 0 1px 2px #000; font-variant-numeric: normal; }
.info p { height: 18px; }
.nav3d { display: flex; flex-direction: column; align-items: flex-end; gap: 2px; margin-left: auto; }
.gizmo { width: 82px; height: 84px; margin: 0 1px -3px 0; }
.gizmo text { font: 600 11px Inter, sans-serif; fill: #1c2430; text-anchor: middle; }
.round { display: flex; align-items: center; justify-content: center; width: 28px; height: 28px; border-radius: 50%; background: #545454; color: #e0e0e0; }
.sidetab { position: absolute; right: 0; top: 66px; width: 8px; height: 19px; padding: 0; background: #5a5a5a; border-radius: 4px 0 0 4px; }

/* basemap dialog */
.dialog { position: absolute; left: 710px; top: 450px; width: 314px; height: 128px; padding: 0 7px; border-radius: 4px; background: #181818; box-shadow: 0 2px 6px #0004; }
.dialog h2 { height: 33px; padding: 9px 1px 0; font-size: 11px; font-weight: 400; color: #eee; border-bottom: 1px solid #303030; }
.dialog .row { display: flex; align-items: center; margin: 13px 0 5px; }
.dialog .row label { width: 74px; padding-left: 1px; color: #999; }
.dialog input { flex: 1; width: 100%; height: 20px; padding: 0 7px; border: 1px solid #3e3e3e; border-radius: 4px; background: #1f1f1f; }
.zoomfield { position: relative; }
.zoomfield input { display: block; color: #fff; }
.caret { position: absolute; left: 22px; top: 1px; width: 2px; height: 18px; background: #71a8ff; }
.actions { display: grid; grid-template-columns: 1fr 1fr; gap: 8px; margin-top: 10px; }
.actions button { height: 20px; border-radius: 4px; background: #545454; }
.actions .ok { background: #4772b3; color: #fff; }

/* timeline */
.timeline .w46 { background: #282828; gap: 7px; }
.timeline .w30, .outliner .w32, .properties .w32, .properties .hdr .sq { background: #282828; border: 1px solid #3a3a3a; }
.hdr .tmenus { margin-left: -4px; }
.play .btn { width: 19px; }
.play .ic { width: 13px; height: 13px; }
.frame { width: 73px; text-align: center; }
.range { width: 86px; padding: 0 13px 0 15px; justify-content: space-between; }
.range input { width: 30px; text-align: right; }
.timeline { background: #1f1f1f; }
.timeline .hdr { background: #303030; height: 25px; }
.ruler { position: relative; flex: 1; background: linear-gradient(#303030, #303030) 79px 23px / calc(100% - 156px) 100% no-repeat #1d1d1d; }
.ruler ol { display: flex; height: 100%; padding: 0 38px 0 110px; }
.ruler li { flex: 1; padding-top: 4px; text-align: center; color: #a0a0a0; background: linear-gradient(#151515, #151515) 50% 23px / 1px 100% no-repeat, linear-gradient(#262626, #262626) 0 23px / 1px 100% no-repeat; }
.playhead { position: absolute; left: 67px; top: 3px; bottom: 0; width: 24px; background: linear-gradient(#5680c2, #5680c2) 50% 0 / 2px 100% no-repeat; }
.playhead b { display: block; height: 17px; border-radius: 4px; background: #4772b3; color: #fff; font-weight: 400; text-align: center; }
.scroll { position: absolute; left: 9px; right: 7px; bottom: 2px; height: 8px; border-radius: 4px; background: #545454; }
.edge-l, .edge-r { position: absolute; top: 16px; color: #999; }
.edge-l { left: -2px; }
.edge-r { right: -2px; }

/* outliner */
.outliner { background: repeating-linear-gradient(#282828 0 20px, #2b2b2b 20px 40px) 0 26px; }
.search { display: flex; align-items: center; gap: 6px; width: 118px; height: 19px; padding-left: 4px; border: 1px solid #3a3a3a; border-radius: 4px; background: #1d1d1d; }
.search input { width: 80px; }
.outliner .hdr, .properties .hdr { padding-left: 8px; }
.outliner .search { margin-right: 22px; }
.tree li { display: flex; align-items: center; height: 20px; padding: 0 11px 0 20px; white-space: nowrap; color: #c8c8c8; }
.tree li.child { margin-left: 28px; padding-left: 11px; border-left: 1px solid #555; }
.tw { display: flex; align-items: center; justify-content: center; width: 20px; height: 18px; color: #e0e0e0; }
.tree li:first-child .tw, .tree .tw + .tw { margin-right: 4px; }
.tree .hot { background: #505050; border-radius: 4px; }
.data { display: flex; align-items: center; justify-content: center; width: 20px; height: 18px; margin-left: 21px; border-radius: 4px; }
.hotg { background: #505050; color: #1fa37a; }
.flags { display: flex; align-items: center; gap: 6px; margin-left: auto; color: #e0e0e0; }
.flags input { appearance: none; width: 11px; height: 11px; margin-right: 1px; background: #e6e6e6; border-radius: 1px; display: grid; place-items: center; }
.flags input::after, .panel input[type="checkbox"]::after { content: ""; width: 4px; height: 7px; border: solid #222; border-width: 0 2px 2px 0; transform: rotate(45deg) translate(-1px, -1px); }

/* properties */
.properties .hdr { height: 25px; }
.pbody { flex: 1; display: flex; }
.ptabs { width: 28px; padding-top: 9px; display: flex; flex-direction: column; gap: 2px; background: #1d1d1d; }
.ptabs button { display: flex; align-items: center; justify-content: center; height: 26px; margin-left: 2px; color: #aaa; border-radius: 4px 0 0 4px; }
.ptabs .gap { margin-bottom: 8px; }
.ptabs .on { background: #303030; color: #e0e0e0; }
.pmain { flex: 1; padding: 0 8px; }
.crumbs { display: flex; align-items: center; height: 37px; padding: 0 2px; gap: 9px; color: #e0e0e0; }
.crumbs .cv { margin-left: 5px; }
.crumbs .cv + .ic { margin-left: -2px; }
.pinr { margin-left: auto; color: #888; }
.panels { display: flex; flex-direction: column; gap: 2px; }
.panel { border-radius: 4px; background: #3d3d3d; }
.panel h3 { display: flex; align-items: center; gap: 4px; height: 25px; padding: 0 6px 0 8px; font-size: 11px; font-weight: 400; color: #e0e0e0; }
.panel h3 label { display: flex; align-items: center; gap: 3px; margin-left: -1px; }
.panel input[type="checkbox"] { appearance: none; width: 12px; height: 12px; border-radius: 2px; background: #4772b3; display: grid; place-items: center; }
.panel input[type="checkbox"]::after { border-color: #fff; }
.grip { width: 12px; height: 6px; margin-left: auto; color: #8a8a8a; }
.fields { display: grid; grid-template-columns: 157px 1fr; column-gap: 10px; row-gap: 6px; align-items: center; padding: 9px 9px 9px 0; text-align: right; color: #e0e0e0; }
.field { display: flex; align-items: center; gap: 7px; height: 19px; padding: 0 4px; border-radius: 4px; background: #1d1d1d; }
.field input { flex: 1; }
.watermark { position: absolute; right: 36px; bottom: 11px; font-size: 25px; line-height: 32px; font-variant-numeric: normal; color: #d6d6d6; text-shadow: 1px 1px 1px #000; white-space: nowrap; }

/* status bar */
.status { display: flex; align-items: center; justify-content: flex-end; gap: 9px; padding-right: 11px; color: #888; font-variant-numeric: normal; }
.status span { padding-left: 4px; border-left: 1px solid #777; line-height: 13px; }
```
